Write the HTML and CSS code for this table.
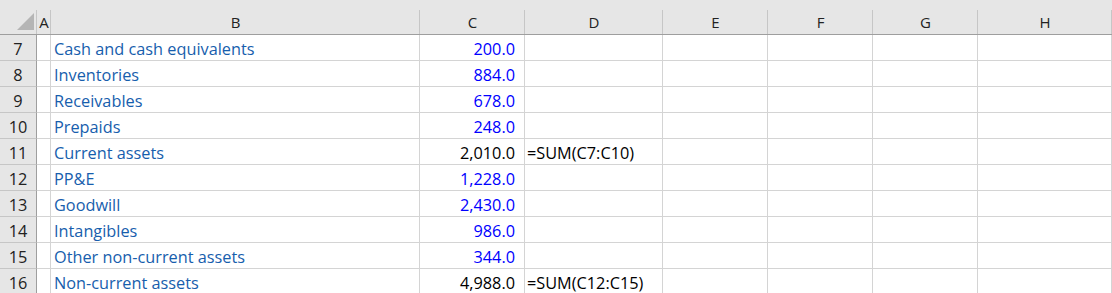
FILE: index.html
```html
<!DOCTYPE html>
<html lang="en">
<head>
    <meta charset="UTF-8">
    <title>Sheet</title>
    <link rel="stylesheet" href="styles.css">
</head>
<body>

<div class="sheet">
    <div class="corner"><span class="corner-mark"></span></div>
    <div class="col-head">A</div>
    <div class="col-head">B</div>
    <div class="col-head">C</div>
    <div class="col-head">D</div>
    <div class="col-head">E</div>
    <div class="col-head">F</div>
    <div class="col-head">G</div>
    <div class="col-head">H</div>

    <div class="row-head">7</div>
    <div class="cell"></div>
    <div class="cell label">Cash and cash equivalents</div>
    <div class="cell num input">200.0</div>
    <div class="cell"></div><div class="cell"></div><div class="cell"></div><div class="cell"></div><div class="cell"></div>

    <div class="row-head">8</div>
    <div class="cell"></div>
    <div class="cell label">Inventories</div>
    <div class="cell num input">884.0</div>
    <div class="cell"></div><div class="cell"></div><div class="cell"></div><div class="cell"></div><div class="cell"></div>

    <div class="row-head">9</div>
    <div class="cell"></div>
    <div class="cell label">Receivables</div>
    <div class="cell num input">678.0</div>
    <div class="cell"></div><div class="cell"></div><div class="cell"></div><div class="cell"></div><div class="cell"></div>

    <div class="row-head">10</div>
    <div class="cell"></div>
    <div class="cell label">Prepaids</div>
    <div class="cell num input">248.0</div>
    <div class="cell"></div><div class="cell"></div><div class="cell"></div><div class="cell"></div><div class="cell"></div>

    <div class="row-head">11</div>
    <div class="cell"></div>
    <div class="cell label">Current assets</div>
    <div class="cell num">2,010.0</div>
    <div class="cell formula">=SUM(C7:C10)</div>
    <div class="cell"></div><div class="cell"></div><div class="cell"></div><div class="cell"></div>

    <div class="row-head">12</div>
    <div class="cell"></div>
    <div class="cell label">PP&amp;E</div>
    <div class="cell num input">1,228.0</div>
    <div class="cell"></div><div class="cell"></div><div class="cell"></div><div class="cell"></div><div class="cell"></div>

    <div class="row-head">13</div>
    <div class="cell"></div>
    <div class="cell label">Goodwill</div>
    <div class="cell num input">2,430.0</div>
    <div class="cell"></div><div class="cell"></div><div class="cell"></div><div class="cell"></div><div class="cell"></div>

    <div class="row-head">14</div>
    <div class="cell"></div>
    <div class="cell label">Intangibles</div>
    <div class="cell num input">986.0</div>
    <div class="cell"></div><div class="cell"></div><div class="cell"></div><div class="cell"></div><div class="cell"></div>

    <div class="row-head">15</div>
    <div class="cell"></div>
    <div class="cell label">Other non-current assets</div>
    <div class="cell num input">344.0</div>
    <div class="cell"></div><div class="cell"></div><div class="cell"></div><div class="cell"></div><div class="cell"></div>

    <div class="row-head">16</div>
    <div class="cell"></div>
    <div class="cell label">Non-current assets</div>
    <div class="cell num">4,988.0</div>
    <div class="cell formula">=SUM(C12:C15)</div>
    <div class="cell"></div><div class="cell"></div><div class="cell"></div><div class="cell"></div>
</div>

</body>
</html>
```

FILE: styles.css
```css
:root {
    --header-bg: #e6e6e6;
    --header-line: #c6c6c6;
    --header-edge: #9e9e9e;
    --grid-line: #d4d4d4;
    --label-color: #175ead;
    --input-color: #0000ff;
    --text-color: #000000;
}

html, body {
    margin: 0;
    height: 100%;
    overflow: hidden;
    background: #ffffff;
}

body {
    font-family: "Open Sans", Lato, "Liberation Sans", sans-serif;
    font-size: 16.3px;
    color: var(--text-color);
}

.sheet {
    display: grid;
    grid-template-columns: 37px 14px 369px 105px 138px 105px 105px 105px 1fr;
    grid-template-rows: 35px;
    grid-auto-rows: 26px;
}

.corner,
.col-head {
    box-sizing: border-box;
    background-color: var(--header-bg);
    border-bottom: 1px solid var(--header-edge);
    background-image: linear-gradient(var(--header-line), var(--header-line));
    background-repeat: no-repeat;
    background-position: right bottom;
    background-size: 1px 24px;
}

.corner {
    display: flex;
    align-items: flex-end;
    justify-content: flex-end;
    padding: 0 3px 4px 0;
}

.corner-mark {
    width: 17px;
    height: 17px;
    background: #b5b5b5;
    clip-path: polygon(100% 0, 100% 100%, 0 100%);
}

.col-head {
    display: flex;
    align-items: flex-end;
    justify-content: center;
    padding-bottom: 3px;
    font-size: 15px;
    line-height: 18px;
    color: #222222;
}

.row-head {
    box-sizing: border-box;
    background: var(--header-bg);
    border-right: 1px solid var(--header-edge);
    border-bottom: 1px solid var(--header-line);
    display: flex;
    align-items: flex-end;
    justify-content: center;
    padding-bottom: 2px;
    line-height: 18px;
    color: #222222;
}

.cell {
    box-sizing: border-box;
    border-right: 1px solid var(--grid-line);
    border-bottom: 1px solid var(--grid-line);
    display: flex;
    align-items: flex-end;
    padding: 0 4px 2px 3px;
    line-height: 18px;
    white-space: nowrap;
    overflow: visible;
}

.label {
    color: var(--label-color);
}

.num {
    justify-content: flex-end;
    padding-right: 9px;
}

.num.input {
    color: var(--input-color);
}

.formula {
    padding-left: 2px;
}
```
